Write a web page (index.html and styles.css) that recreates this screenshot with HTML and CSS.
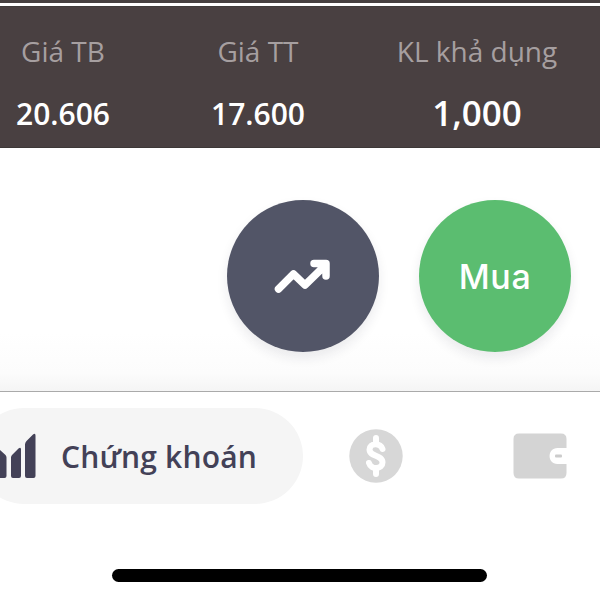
FILE: index.html
```
<!DOCTYPE html>
<html lang="vi">
<head>
<meta charset="utf-8">
<title>Chứng khoán</title>
<link rel="stylesheet" href="styles.css">
</head>
<body>
<header class="summary">
  <div class="metric"><span class="label">Giá TB</span><strong class="value">20.606</strong></div>
  <div class="metric"><span class="label">Giá TT</span><strong class="value">17.600</strong></div>
  <div class="metric"><span class="label">KL khả dụng</span><strong class="value value-large">1,000</strong></div>
</header>
<main class="actions">
  <button class="action chart" aria-label="Biểu đồ">
    <svg width="60" height="40" viewBox="0 0 60 40" fill="none" stroke="#fff" stroke-width="7.500" stroke-linecap="round" stroke-linejoin="round"><path d="M5.500 33 20.500 18 32 29 51 10.500M41 7.500H53V20"/><path d="M43 8H53V17Z" fill="#fff" stroke="none"/></svg>
  </button>
  <button class="action buy">Mua</button>
</main>
<nav class="tabs">
  <a class="tab active">
    <svg width="36" height="48" viewBox="0 0 36 48" fill="#434157"><path d="M0 18 5.500 23Q6.500 24 6.500 25.500V44Q6.500 46 4.500 46H0ZM11 25.500Q11 24 12 23L18.500 16.500Q21 14.500 21 17.500V44Q21 46 19 46H13Q11 46 11 44ZM25 12.500Q25 10.500 26.500 9L33 2.500Q35.500 .5 35.500 3.500V44Q35.500 46 33.500 46H27Q25 46 25 44Z"/></svg>
    <span class="tab-name">Chứng khoán</span>
  </a>
  <a class="tab money" aria-label="Tiền">
    <svg width="54" height="54" viewBox="0 0 54 54"><circle cx="27" cy="27" r="26.700" fill="#d7d7d7"/><path d="M27 9V13M27 41V45M33.500 20C31 13.500 20.500 14 20.500 20.500C20.500 28 33.500 25.500 33.500 33.500C33.500 40.500 22 41 20 34" fill="none" stroke="#fff" stroke-width="6" stroke-linecap="round"/></svg>
  </a>
  <a class="tab wallet" aria-label="Ví">
    <svg width="54" height="46" viewBox="0 0 54 46"><path d="M6 .5H48Q53.500 .5 53.500 6V15H44.500C34 15 34 31 44.500 31H53.500V40Q53.500 45.500 48 45.500H6Q.5 45.500 .5 40V6Q.5 .5 6 .5Z" fill="#d4d4d4"/><rect x="42" y="21.500" width="7" height="3" rx="1" fill="#ccc"/></svg>
  </a>
</nav>
<div class="home-bar"></div>
</body>
</html>
```
FILE: styles.css
```
* { box-sizing: border-box; }
body {
  margin: 0;
  height: 600px;
  overflow: hidden;
  display: flex;
  flex-direction: column;
  background: #fff;
  font-family: "Open Sans", sans-serif;
}
.summary {
  height: 148px;
  flex: none;
  display: grid;
  grid-template-columns: 195px 195px 243px;
  padding-top: 31px;
  margin-left: -34.500px;
  background: linear-gradient(#464040 0 3px, #fff 3px 6px, #3f3c3b 6px 7px, #494041 7px 147px, #3d3837 147px);
}
.metric { display: flex; flex-direction: column; align-items: center; }
.label { font-size: 28px; line-height: 40px; color: #a69fa0; }
.value {
  margin-top: 21px;
  font-size: 30px;
  line-height: 44px;
  font-weight: 600;
  color: #fff;
}
.value-large { font-size: 35px; line-height: 42px; }
.actions {
  height: 243px;
  flex: none;
  display: flex;
  justify-content: flex-end;
  gap: 40.500px;
  padding: 52px 29px 0 0;
  background: linear-gradient(#fff 185px, #fcfcfc 225px, #f5f5f5);
}
.action {
  width: 152px;
  height: 152px;
  display: flex;
  align-items: center;
  justify-content: center;
  padding: 0;
  border: 0;
  border-radius: 50%;
  color: #fff;
  box-shadow: 0 6px 12px rgba(30, 30, 60, .09);
}
.chart { background: #525567; }
.buy { background: #5bbd70; font: 500 34px "Inter", sans-serif; letter-spacing: .6px; }
.tabs {
  height: 112px;
  flex: none;
  display: flex;
  align-items: center;
  padding-top: 16px;
  border-top: 1px solid #aaa;
}
.tab { display: flex; }
.active {
  width: 327px;
  height: 96px;
  margin-left: -24px;
  padding-left: 24px;
  align-items: center;
  gap: 25px;
  border-radius: 48px;
  background: #f5f5f5;
  color: #434157;
  font-size: 30px;
  font-weight: 600;
}
.tab-name { padding-top: 2px; letter-spacing: .2px; }
.money { margin-left: 46px; }
.wallet { margin-left: 110px; }
.home-bar {
  width: 375px;
  height: 13px;
  margin: 66px 0 0 112px;
  border-radius: 7px;
  background: #000;
}
```
